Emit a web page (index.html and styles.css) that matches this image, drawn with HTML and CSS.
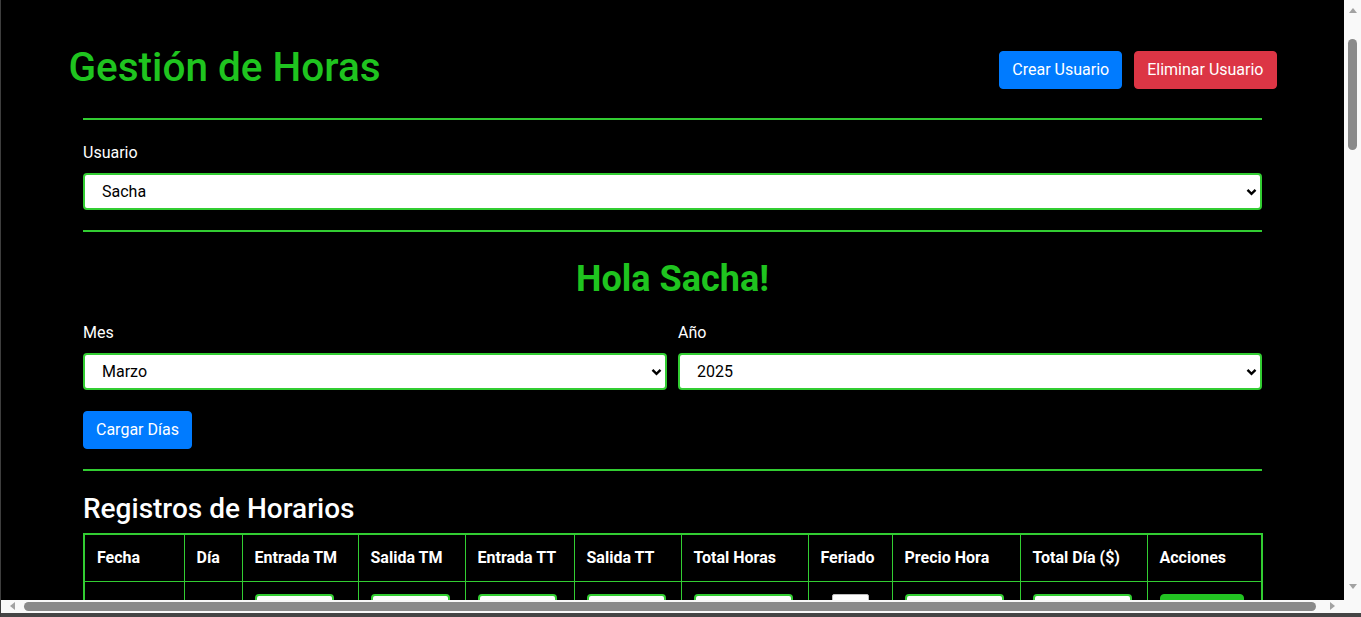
FILE: index.html
```html
<!DOCTYPE html>
<html lang="es">
<head>
<meta charset="utf-8">
<title>Gestión de Horas</title>
<link rel="stylesheet" href="styles.css">
</head>
<body>
<div class="window">
<div class="app">
<div class="page">
  <header class="header">
    <h1 class="title">Gestión de Horas</h1>
    <div class="header-actions">
      <button class="btn btn-blue">Crear Usuario</button>
      <button class="btn btn-red">Eliminar Usuario</button>
    </div>
  </header>

  <main class="content">
    <hr class="rule">
    <section class="sec-user">
      <label class="field-label">Usuario</label>
      <div class="select-wrap">
        <select class="select"><option>Sacha</option></select>
        <svg class="chev" width="11" height="8" viewBox="0 0 11 8"><path d="M1.5 1.8 L5.5 5.8 L9.5 1.8" fill="none" stroke="#000" stroke-width="2.4"/></svg>
      </div>
    </section>
    <hr class="rule">
    <section class="sec-period">
      <h2 class="greeting">Hola Sacha!</h2>
      <div class="period-grid">
        <div class="field">
          <label class="field-label">Mes</label>
          <div class="select-wrap">
            <select class="select"><option>Marzo</option></select>
            <svg class="chev" width="11" height="8" viewBox="0 0 11 8"><path d="M1.5 1.8 L5.5 5.8 L9.5 1.8" fill="none" stroke="#000" stroke-width="2.4"/></svg>
          </div>
        </div>
        <div class="field">
          <label class="field-label">Año</label>
          <div class="select-wrap">
            <select class="select"><option>2025</option></select>
            <svg class="chev" width="11" height="8" viewBox="0 0 11 8"><path d="M1.5 1.8 L5.5 5.8 L9.5 1.8" fill="none" stroke="#000" stroke-width="2.4"/></svg>
          </div>
        </div>
      </div>
      <button class="btn btn-blue">Cargar Días</button>
    </section>
    <hr class="rule">
    <section class="sec-table">
      <h3 class="table-title">Registros de Horarios</h3>
      <table class="grid">
        <colgroup>
          <col class="w-fecha"><col class="w-dia"><col class="w-etm"><col class="w-stm"><col class="w-ett"><col class="w-stt"><col class="w-th"><col class="w-fer"><col class="w-ph"><col class="w-td"><col class="w-acc">
        </colgroup>
        <thead>
          <tr><th>Fecha</th><th>Día</th><th>Entrada TM</th><th>Salida TM</th><th>Entrada TT</th><th>Salida TT</th><th>Total Horas</th><th>Feriado</th><th>Precio Hora</th><th>Total Día ($)</th><th>Acciones</th></tr>
        </thead>
        <tbody>
          <tr><td>1/3/2025</td><td>Sáb</td><td><input class="in in-time" type="time"></td><td><input class="in in-time" type="time"></td><td><input class="in in-time" type="time"></td><td><input class="in in-time" type="time"></td><td><input class="in in-num" type="text" readonly></td><td class="center"><input class="chk" type="checkbox"></td><td><input class="in in-num" type="text"></td><td><input class="in in-num" type="text" readonly></td><td><button class="btn btn-green">Guardar</button></td></tr>
          <tr><td>2/3/2025</td><td>Dom</td><td><input class="in in-time" type="time"></td><td><input class="in in-time" type="time"></td><td><input class="in in-time" type="time"></td><td><input class="in in-time" type="time"></td><td><input class="in in-num" type="text" readonly></td><td class="center"><input class="chk" type="checkbox"></td><td><input class="in in-num" type="text"></td><td><input class="in in-num" type="text" readonly></td><td><button class="btn btn-green">Guardar</button></td></tr>
        </tbody>
      </table>
    </section>
  </main>
</div>
</div>
<div class="vbar">
  <div class="arr-box arr-box-up"><span class="arr arr-up"></span></div>
  <div class="vtrack"><span class="vthumb"></span></div>
  <div class="arr-box arr-box-down"><span class="arr arr-down"></span></div>
</div>
<div class="hbar">
  <div class="arr-box arr-box-side"><span class="arr arr-left"></span></div>
  <div class="htrack"><span class="hthumb"></span></div>
  <div class="arr-box arr-box-side"><span class="arr arr-right"></span></div>
</div>
<div class="corner"></div>
<div class="frame"></div>
</div>
</body>
</html>
```
FILE: styles.css
```css
html, body {
  margin: 0;
  padding: 0;
  height: 100%;
  background: #000;
}

body {
  font-family: Roboto, "Noto Sans", "Liberation Sans", sans-serif;
  font-size: 16px;
  line-height: 1.5;
  color: #fff;
  overflow: hidden;
}

/* browser window: page viewport + scrollbars */
.window {
  display: grid;
  grid-template-columns: 1fr 17px;
  grid-template-rows: 600px 13px 4px;
  height: 100vh;
  box-sizing: border-box;
  border-left: 1px solid #3e3e3e;
}

.app {
  overflow: hidden;
  min-width: 0;
  min-height: 0;
}

.vbar {
  grid-column: 2;
  grid-row: 1;
  display: flex;
  flex-direction: column;
  align-items: center;
  background: #f9f9f9;
}

.vtrack {
  flex: 1;
  display: flex;
  flex-direction: column;
  align-items: center;
  width: 100%;
}

.vthumb {
  display: block;
  width: 9px;
  height: 111px;
  margin-top: 19px;
  margin-left: -1px;
  border-radius: 5px;
  background: #8a8a8a;
}

.hbar {
  grid-column: 1;
  grid-row: 2;
  display: flex;
  align-items: center;
  background: #f9f9f9;
}

.htrack {
  flex: 1;
  display: flex;
  align-items: center;
}

.hthumb {
  display: block;
  height: 9px;
  width: 1292px;
  margin-top: -1px;
  border-radius: 5px;
  background: #8a8a8a;
}

.corner {
  grid-column: 2;
  grid-row: 2;
  background: #f9f9f9;
}

.frame {
  grid-column: 1 / -1;
  grid-row: 3;
  background: #454545;
}

.arr-box {
  display: flex;
  align-items: center;
  justify-content: center;
  flex: none;
}
.arr-box-up { width: 17px; height: 20px; }
.arr-box-down { width: 17px; height: 28px; }
.arr-box-side { width: 23px; height: 13px; }

.arr {
  display: block;
  width: 0;
  height: 0;
  border-style: solid;
  border-color: transparent;
}
.arr-up { border-width: 0 4px 5px; border-bottom-color: #a2a2a2; }
.arr-down { border-width: 5px 4px 0; border-top-color: #a2a2a2; }
.arr-left { border-width: 4px 5px 4px 0; border-right-color: #a2a2a2; margin-top: -1px; }
.arr-right { border-width: 4px 0 4px 5px; border-left-color: #a2a2a2; margin-top: -1px; }

/* page */
.page {
  width: 1208px;
  margin: 0 auto;
  padding-top: 43px;
}

.header {
  display: flex;
  justify-content: space-between;
  align-items: flex-start;
}

.title {
  margin: 0;
  font-size: 40.5px;
  font-weight: 500;
  line-height: 48px;
  color: #1fc41f;
}

.header-actions {
  display: flex;
  gap: 12px;
  margin-top: 8px;
}

.btn {
  font-family: inherit;
  font-size: 16px;
  line-height: 24px;
  padding: 6px 12px;
  border: 1px solid transparent;
  border-radius: 4px;
  color: #fff;
  cursor: pointer;
}
.btn-blue { background: #007bff; border-color: #007bff; }
.btn-red { background: #dc3545; border-color: #dc3545; }
.btn-green { background: #22c322; border-color: #22c322; width: 84px; padding: 6px 0; }

.content {
  margin: 27px 14.5px 0;
}

.rule {
  border: 0;
  border-top: 2px solid #32cd32;
  margin: 0;
}

.sec-user {
  padding: 21px 0 20px;
}

.field-label {
  display: block;
  margin-bottom: 8px;
  line-height: 24px;
}

.select-wrap {
  position: relative;
}

.select {
  display: block;
  width: 100%;
  height: 37px;
  appearance: none;
  -webkit-appearance: none;
  background: #fff;
  border: 2px solid #32cd32;
  border-radius: 4px;
  padding: 0 17px;
  font-family: inherit;
  font-size: 16px;
  color: #000;
}

.chev {
  position: absolute;
  right: 5px;
  top: 15px;
  pointer-events: none;
}

.sec-period {
  padding: 26px 0 20px;
}

.greeting {
  margin: 0 0 20px;
  text-align: center;
  font-size: 36px;
  font-weight: 700;
  line-height: 43px;
  color: #1fc41f;
}

.period-grid {
  display: grid;
  grid-template-columns: 1fr 1fr;
  column-gap: 11px;
  margin-bottom: 21px;
}

.sec-table {
  padding-top: 21px;
}

.table-title {
  margin: 0 0 7px;
  font-size: 28px;
  font-weight: 500;
  line-height: 33.6px;
  color: #fff;
}

.grid {
  width: 1178px;
  border-collapse: collapse;
  table-layout: fixed;
  border: 2px solid #32cd32;
}

.w-fecha { width: 100px; }
.w-dia { width: 58px; }
.w-etm { width: 116px; }
.w-stm { width: 107px; }
.w-ett { width: 109px; }
.w-stt { width: 107px; }
.w-th { width: 127px; }
.w-fer { width: 84px; }
.w-ph { width: 128px; }
.w-td { width: 127px; }
.w-acc { width: 115px; }

.grid th,
.grid td {
  border: 1px solid #32cd32;
  padding: 12px;
  text-align: left;
  vertical-align: middle;
}

.grid th {
  padding-top: 11px;
  padding-bottom: 11px;
  font-weight: 700;
  line-height: 24px;
}

.grid td.center {
  text-align: center;
}

.in {
  display: block;
  box-sizing: border-box;
  height: 38px;
  background: #fff;
  border: 2px solid #32cd32;
  border-radius: 4px;
  font-family: inherit;
  font-size: 14px;
  padding: 0 6px;
}
.in-time { width: 79px; }
.in-num { width: 99px; }

.chk {
  appearance: none;
  -webkit-appearance: none;
  display: block;
  width: 37px;
  height: 38px;
  margin: 0 auto;
  background: #fff;
  border: 1px solid #bdbdbd;
  border-radius: 2px;
}
```
